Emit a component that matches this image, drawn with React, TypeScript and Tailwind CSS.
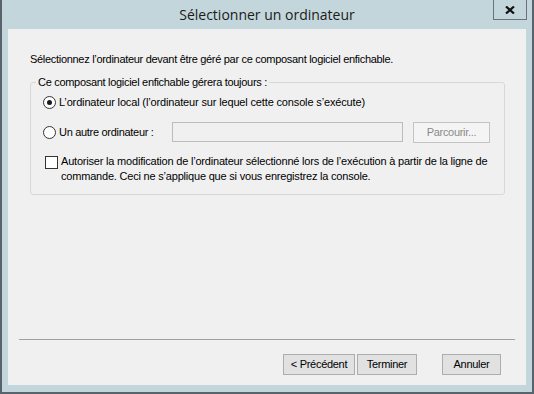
import React from "react";

function Radio({ checked }: { checked?: boolean }) {
    return (
        <span className="flex h-[13px] w-[13px] shrink-0 items-center justify-center rounded-full border border-[#333333] bg-white">
            {checked && <span className="h-[5px] w-[5px] rounded-full bg-[#1a1a1a]" />}
        </span>
    );
}

function Button({ label, width, disabled }: { label: string; width: string; disabled?: boolean }) {
    return (
        <button
            className={
                disabled
                    ? `${width} h-[21px] border border-[#c4c4c4] bg-[#f4f4f4] text-[11px] tracking-[-0.3px] text-[#8a8a8a]`
                    : `${width} h-[21px] border border-[#adadad] bg-[#e1e1e1] text-[11px] tracking-[-0.3px] text-black`
            }
        >
            {label}
        </button>
    );
}

export default function App() {
    return (
        <div
            className="flex h-[394px] w-[534px] flex-col border-x-2 border-b-2 border-[#59636d] bg-[#c3d6dc] text-black"
            style={{ fontFamily: '"Liberation Sans", Arial, sans-serif' }}
        >
            {/* Title bar */}
            <div className="relative flex h-[29px] shrink-0 items-center justify-center">
                <span className="pb-[1px] text-[14px] text-[#1b1b1b]" style={{ fontFamily: '"Open Sans", sans-serif' }}>
                    Sélectionner un ordinateur
                </span>
                <div className="absolute right-[5px] top-0 flex h-[20px] w-[34px] items-center justify-center border-x border-b border-[#6b737a]">
                    <svg width="10" height="8" viewBox="0 0 10 8">
                        <path d="M1 0.5 L9 7.5 M9 0.5 L1 7.5" stroke="#111" strokeWidth="2.2" />
                    </svg>
                </div>
            </div>

            {/* Content */}
            <div className="mx-[6px] flex flex-1 flex-col bg-[#f0f0f0] text-[11px] tracking-[-0.3px]">
                <p className="ml-[22px] mt-[24px] leading-[13px]">
                    Sélectionnez l’ordinateur devant être géré par ce composant logiciel enfichable.
                </p>

                <fieldset className="ml-[22px] mr-[21px] mt-[10px] rounded-[3px] border border-[#d5d9dc] pb-[10px] pl-[12px]">
                    <legend className="-ml-[7px] px-[2px] leading-[13px]">Ce composant logiciel enfichable gérera toujours :</legend>

                    <div className="mt-[3px] flex h-[20px] items-center">
                        <Radio checked />
                        <span className="ml-[3px] tracking-[-0.15px]">L’ordinateur local (l’ordinateur sur lequel cette console s’exécute)</span>
                    </div>

                    <div className="mt-[10px] flex h-[20px] items-center">
                        <Radio />
                        <span className="ml-[3px] w-[113px]">Un autre ordinateur :</span>
                        <div className="h-[20px] w-[231px] border border-[#bcbcbc] bg-[#f0f0f0]" />
                        <div className="ml-[10px]">
                            <Button label="Parcourir..." width="w-[77px]" disabled />
                        </div>
                    </div>

                    <div className="mt-[12px] flex items-start pl-[2px]">
                        <span className="mt-[2px] h-[13px] w-[13px] shrink-0 border border-[#333333] bg-white" />
                        <p className="ml-[3px] whitespace-nowrap leading-[15px] tracking-[-0.2px]">
                            Autoriser la modification de l’ordinateur sélectionné lors de l’exécution à partir de la ligne de
                            <br />
                            commande. Ceci ne s’applique que si vous enregistrez la console.
                        </p>
                    </div>
                </fieldset>

                <div className="flex-1" />

                <div className="mx-[11px] h-px bg-[#a0a0a0]" />

                <div className="mb-[10px] mr-[25px] mt-[14px] flex justify-end">
                    <Button label="< Précédent" width="w-[72px]" />
                    <div className="ml-[2px]">
                        <Button label="Terminer" width="w-[60px]" />
                    </div>
                    <div className="ml-[25px]">
                        <Button label="Annuler" width="w-[59px]" />
                    </div>
                </div>
            </div>
            <div className="h-[7px] shrink-0" />
        </div>
    );
}
